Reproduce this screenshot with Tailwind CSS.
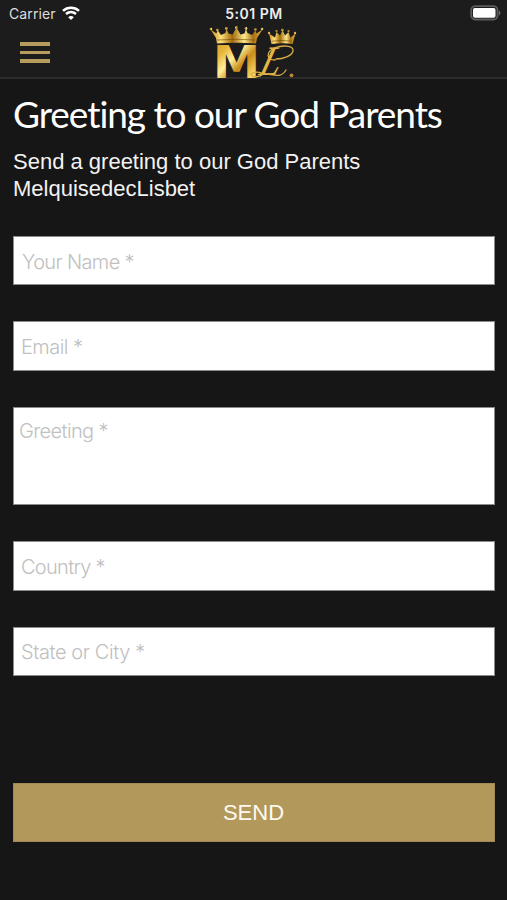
<!DOCTYPE html>
<html lang="en">
<head>
    <meta charset="UTF-8">
    <meta name="viewport" content="width=device-width, initial-scale=1.0">
    <title>Greeting to our God Parents</title>
    <script src="https://cdn.jsdelivr.net/npm/@tailwindcss/browser@4"></script>
</head>
<body class="bg-[#161616] h-[900px] overflow-hidden text-white font-['Liberation_Sans',Arial,sans-serif]">
    <header class="h-[79px] bg-[#1c1c1c] border-b-2 border-[#2b2b2b]">
        <!-- Status bar -->
        <div class="grid grid-cols-3 items-center h-[26px] pl-[9px] pr-[6px] font-['Inter',sans-serif] text-[14px] leading-[24px]">
            <div class="flex items-center gap-[6px] text-[#dedede]">
                <span class="tracking-[0.1px] pt-[2px]">Carrier</span>
                <svg class="w-[18px] h-[14px]" viewBox="0 0 18 14" fill="none" stroke="#fff" stroke-width="2.5">
                    <path d="M1 4.8C5.5.6 12.5.6 17 4.8"/>
                    <path d="M4 8c3-2.6 7-2.6 10 0"/>
                    <path d="M9 14 6.200 11.200c1.600-1.500 4-1.500 5.600 0z" fill="#fff" stroke="none"/>
                </svg>
            </div>
            <div class="text-center font-semibold text-[#ededed] whitespace-nowrap tracking-[0.5px] pt-[2px] pr-[2px]">5:01 PM</div>
            <svg class="w-[31px] h-[16px] justify-self-end" viewBox="0 0 31 16">
                <rect x="1.200" y="1.200" width="26.300" height="13.300" rx="4" fill="#1c1c1c" stroke="#5d5d5d" stroke-width="1.800"/>
                <rect x="3" y="3" width="22.500" height="9.800" rx="1.800" fill="#fff"/>
                <path d="M28.800 5.500c2.200.8 2.200 4.200 0 5z" fill="#6a6a6a"/>
            </svg>
        </div>
        <!-- Nav bar -->
        <div class="grid grid-cols-3 h-[52px] px-[20px]">
            <button class="flex flex-col gap-[5px] w-[30px] pt-[16px]" aria-label="Menu">
                <span class="h-[3.500px] bg-[#b89c5e]"></span>
                <span class="h-[3.500px] bg-[#b89c5e]"></span>
                <span class="h-[3.500px] bg-[#b89c5e]"></span>
            </button>
            <svg class="w-[90px] h-[53px] justify-self-center overflow-visible" viewBox="208 26 90 53">
                <defs>
                    <linearGradient id="gold" x1="0" y1="0" x2="1" y2="1">
                        <stop offset="0" stop-color="#d39a22"/>
                        <stop offset=".25" stop-color="#e8b53b"/>
                        <stop offset=".42" stop-color="#fff09a"/>
                        <stop offset=".58" stop-color="#c98c1a"/>
                        <stop offset=".8" stop-color="#f8d766"/>
                        <stop offset="1" stop-color="#c48a1c"/>
                    </linearGradient>
                    <linearGradient id="crown" x1="0" y1="0" x2="1" y2="0">
                        <stop offset="0" stop-color="#c8871a"/>
                        <stop offset=".2" stop-color="#ffe27a"/>
                        <stop offset=".42" stop-color="#a06a0c"/>
                        <stop offset=".65" stop-color="#ffe98c"/>
                        <stop offset=".82" stop-color="#a87014"/>
                        <stop offset="1" stop-color="#e5b33c"/>
                    </linearGradient>
                </defs>
                <!-- Large crown -->
                <g fill="url(#crown)">
                    <path d="M217 43.500 216 38 210.500 29.500l6 4 1-3.500 3.500 5 4.500-2 1-4 2 4.500 4 1 4-7 4 7 4-1 1.500-4.500 1.500 4 4.500 2 3.500-4.500 1 3 6-4-5.500 8.500-1 5.500q-19-1.500-39 0z"/>
                    <circle cx="211" cy="29" r="1.300"/><circle cx="217.500" cy="30" r="1.300"/><circle cx="226.500" cy="28.500" r="1.400"/>
                    <circle cx="236.500" cy="27.500" r="1.500"/><circle cx="246" cy="28.500" r="1.400"/><circle cx="255.500" cy="29.500" r="1.300"/><circle cx="262" cy="29" r="1.300"/>
                </g>
                <path d="M217 40q19-1.500 38 0" fill="none" stroke="#6e4508" stroke-width=".6"/>
                <!-- Small crown -->
                <g fill="url(#crown)">
                    <path d="M271.500 44 269 33.500l6 4 1.500-5.500 3.500 3.500 2.500-5.500 2.500 5.500 3.500-3.500 2 5.500 5-4-3 10.500q-10-1.500-21 0z"/>
                    <circle cx="269" cy="33" r="1.200"/><circle cx="276.500" cy="31" r="1.100"/><circle cx="282.500" cy="30" r="1.300"/>
                    <circle cx="288.500" cy="31" r="1.100"/><circle cx="295" cy="33" r="1.200"/>
                </g>
                <path d="M272 41.200q10-1.500 20 0" fill="none" stroke="#6e4508" stroke-width=".6"/>
                <!-- Monogram -->
                <text x="213" y="77.500" textLength="47" lengthAdjust="spacingAndGlyphs" font-family="DejaVu Sans" font-weight="bold" font-size="44" fill="url(#gold)">M</text>
                <text transform="translate(258 75) skewX(-16)" font-family="Liberation Serif" font-style="italic" font-size="42" textLength="20" lengthAdjust="spacingAndGlyphs" fill="#e3b648">L</text>
                <g fill="none" stroke="#d9ad45" stroke-width="1.300" stroke-linecap="round">
                    <path d="M275 60c-9 0-9-8-1-12 8-3 20-3 19 3-1 5-10 8-17 8"/>
                    <path d="M263 74c-4-3-11-2-12 1 2 3 9 2 12-1 8-1 17 6 23-4"/>
                </g>
                <circle cx="291.500" cy="75.300" r="1.900" fill="#b8893a"/>
            </svg>
        </div>
    </header>

    <main class="pl-[13px] pr-[12px]">
        <h1 class="pt-[12px] font-['Lato',sans-serif] text-[37px] leading-[46px] tracking-[-1.050px] whitespace-nowrap">Greeting to our God Parents</h1>
        <p class="pt-[11px] text-[22px] leading-[27px] text-[#f2f2f2]">Send a greeting to our God Parents<br>MelquisedecLisbet</p>

        <form class="flex flex-col gap-[36px] pt-[34px] font-['Inter',sans-serif] font-light text-[20px]">
            <input type="text" placeholder="Your Name *" class="h-[49px] px-[8px] pt-[2px] bg-white border border-[#8b8b8b] tracking-[-0.650px] placeholder:text-[#c0c0c0]">
            <input type="text" placeholder="Email *" class="h-[50px] px-[7px] pt-[2px] bg-white border border-[#8b8b8b] tracking-[-0.550px] placeholder:text-[#c0c0c0]">
            <textarea placeholder="Greeting *" class="h-[98px] px-[5px] py-[8px] resize-none bg-white border border-[#8b8b8b] tracking-[-0.600px] placeholder:text-[#c0c0c0]"></textarea>
            <input type="text" placeholder="Country *" class="h-[50px] px-[7px] pt-px bg-white border border-[#8b8b8b] tracking-[-0.700px] placeholder:text-[#c0c0c0]">
            <input type="text" placeholder="State or City *" class="h-[49px] px-[7px] pt-px bg-white border border-[#8b8b8b] tracking-[-0.400px] placeholder:text-[#c0c0c0]">
            <button type="button" class="mt-[71px] h-[59px] pr-px bg-[#b2985b] border border-[#a18a54] font-['Liberation_Sans',Arial,sans-serif] font-normal text-[22px] text-[#fffaf0]">SEND</button>
        </form>
    </main>
</body>
</html>
